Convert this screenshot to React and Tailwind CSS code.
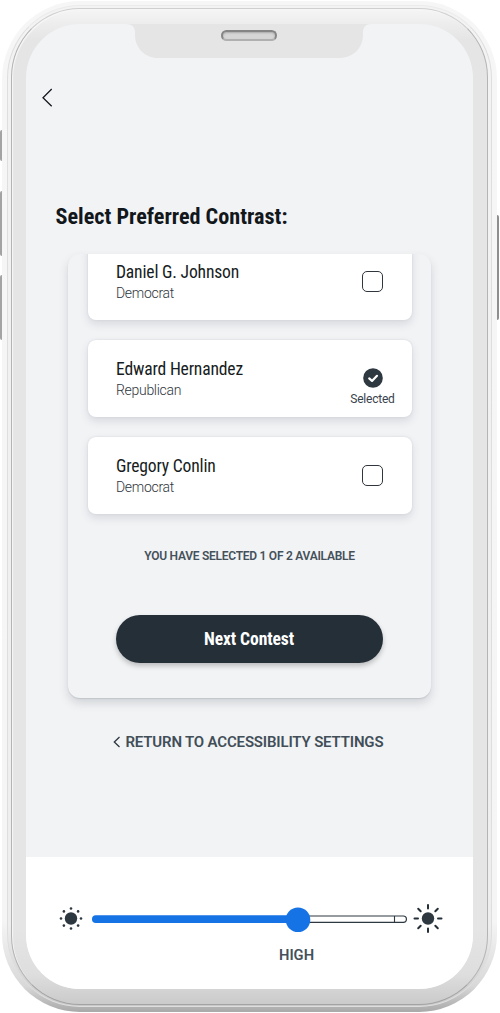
import React from "react";

const COND = "font-['Roboto_Condensed',Roboto,sans-serif] [font-stretch:75%]";

function Row({ name, party, selected }) {
  return (
    <div className="flex h-[77px] w-[324px] shrink-0 items-center justify-between rounded-[8px] bg-white pl-[28.5px] shadow-[0_0_2px_#cfd2da,0_4px_9px_rgba(60,70,90,0.15)]">
      <div className="pt-[1px]">
        <div className={`${COND} h-[22px] whitespace-nowrap text-[17.6px] leading-[22px] tracking-[-0.18px] text-[#171c22]`}>{name}</div>
        <div className="h-[20px] font-[Roboto,sans-serif] text-[14px] font-light leading-[21px] tracking-[-0.3px] text-[#2f353b]">{party}</div>
      </div>
      <div className="flex w-[78px] flex-col items-center">
        {selected ? (
          <>
            <svg className="mt-[18px]" width="20" height="20" viewBox="0 0 20 20">
              <circle cx="10" cy="10" r="9.8" fill="#2d3841" />
              <path d="M6.2 10.4 9 12.9 14 7.8" fill="none" stroke="#fff" strokeWidth="2.2" strokeLinecap="round" strokeLinejoin="round" />
            </svg>
            <div className="mt-[3px] font-[Roboto,sans-serif] text-[12px] leading-[16px] tracking-[-0.22px] text-[#39434c]">Selected</div>
          </>
        ) : (
          <div className="h-[21px] w-[21px] rounded-[5px] border-[1.2px] border-[#30363d] bg-white" />
        )}
      </div>
    </div>
  );
}

function Phone({ children }) {
  return (
    <div className="relative h-[1013px] w-[500px] overflow-hidden bg-white pl-[2px] pt-[1px]">
      <div className="absolute left-0 top-[130px] h-[31px] w-[2px] rounded-l-sm bg-[#a3a3a3]" />
      <div className="absolute left-0 top-[191px] h-[65px] w-[2px] rounded-l-sm bg-[#a3a3a3]" />
      <div className="absolute left-0 top-[275px] h-[65px] w-[2px] rounded-l-sm bg-[#a3a3a3]" />
      <div className="absolute left-[497px] top-[215px] h-[105px] w-[2px] rounded-r-sm bg-[#8e8e8e]" />
      <div className="h-[1011px] w-[495px] rounded-[78px] bg-[linear-gradient(#f6f6f6_0px,#f5f5f5_920px,#d8d8d8_985px,#a9a9a9_1011px)] px-[5px] pb-[5px] pt-[4px]">
        <div className="h-[1002px] w-[485px] rounded-[73px] border border-[#dedede] border-t-[#ebebeb] bg-[linear-gradient(#f3f3f3_0px,#eeeeee_920px,#c8c8c8_1000px)] px-[3px] pb-[3px] pt-[2px]">
          <div className="h-[997px] w-[477px] rounded-[69px] border border-[#b4b4b4] border-t-[#cfcfcf] border-b-[#a3a3a3] bg-[linear-gradient(#f5f5f5_0px,#e5e5e5_30px,#e5e5e5_920px,#dedede_965px,#c9c9c9_997px)] px-[14px] pt-[15px] shadow-[inset_1px_1px_1px_#f7f7f7]">
            <div className="relative h-[965px] w-[447px] overflow-hidden rounded-[54px] bg-[#f2f3f5]">
              <svg className="absolute left-[100px] top-0" width="245" height="34" viewBox="0 0 245 34">
                <path d="M0 0C6 0 9 3 9 9V11C9 24 19 34 32 34H213C227 34 237 24 237 11V9C237 3 240 0 245 0Z" fill="#e5e5e5" />
              </svg>
              <div className="absolute left-[195px] top-[6px] h-[11px] w-[56px] rounded-full border-2 border-[#858585] border-b-[#b0b0b0] bg-[#d6d6d6] shadow-[inset_0_1px_2px_#aaa]" />
              {children}
            </div>
          </div>
        </div>
      </div>
    </div>
  );
}

export default function App() {
  return (
    <Phone>
      <main className="flex h-[833px] flex-col">
        <button className="ml-[16px] mt-[64px] h-[20px] w-[12px]" aria-label="Back">
          <svg width="12" height="20" viewBox="0 0 12 20">
            <path d="M9.7 1 1 9.7 9.7 18.2" fill="none" stroke="#14191f" strokeWidth="1.3" />
          </svg>
        </button>
        <h1 className={`${COND} ml-[29.5px] mt-[93px] h-[31px] whitespace-nowrap text-[22.2px] font-bold leading-[31px] text-[#12171c]`}>Select Preferred Contrast:</h1>
        <section className="ml-[42px] mt-[22px] flex h-[444px] w-[363px] flex-col items-center rounded-[12px] shadow-[0_1px_1px_rgba(120,130,140,0.22),0_5px_10px_rgba(60,70,85,0.18)]">
          <div className="flex h-[284px] w-full shrink-0 flex-col items-center gap-[20px] overflow-hidden rounded-t-[12px]">
            <div className="-mt-[11px]"><Row name="Daniel G. Johnson" party="Democrat" /></div>
            <Row name="Edward Hernandez" party="Republican" selected />
            <Row name="Gregory Conlin" party="Democrat" />
          </div>
          <p className="mt-[10px] font-[Roboto,sans-serif] text-[12px] font-semibold leading-[16px] tracking-[-0.26px] text-[#44515b]">YOU HAVE SELECTED 1 OF 2 AVAILABLE</p>
          <button className={`${COND} mr-px mt-[51px] h-[48px] w-[267px] rounded-full bg-[#252f38] text-[17.6px] font-bold tracking-[-0.1px] text-white shadow-[0_3px_5px_rgba(50,50,50,0.28)]`}>Next Contest</button>
        </section>
        <a className="ml-[87px] mt-[34px] flex h-[20px] items-center gap-[4.5px] whitespace-nowrap font-[Roboto,sans-serif] text-[15px] font-semibold leading-[20px] tracking-[-0.17px] text-[#414e58]">
          <svg width="8" height="12" viewBox="0 0 8 12">
            <path d="M6.5 1 1.3 6l5.2 5" fill="none" stroke="#2d3841" strokeWidth="1.3" />
          </svg>
          <span>RETURN TO ACCESSIBILITY SETTINGS</span>
        </a>
      </main>
      <footer className="flex h-[132px] flex-col bg-white pt-[44px]">
        <div className="flex h-[34px] items-center pl-[33px]">
          <svg width="24" height="24" viewBox="-12 -12.5 24 24" fill="#2d3841">
            <circle r="6.2" />
            <circle cx="0" cy="-10" r="1.3" />
            <circle cx="7.1" cy="-7.1" r="1.3" />
            <circle cx="10" cy="0" r="1.3" />
            <circle cx="7.1" cy="7.1" r="1.3" />
            <circle cx="0" cy="10" r="1.3" />
            <circle cx="-7.1" cy="7.1" r="1.3" />
            <circle cx="-10" cy="0" r="1.3" />
            <circle cx="-7.1" cy="-7.1" r="1.3" />
          </svg>
          <svg className="ml-[9px]" width="315" height="34" viewBox="0 0 315 34">
            <rect x="200" y="15" width="114.4" height="6.3" rx="3.1" fill="#fff" stroke="#2d3841" strokeWidth="1.2" />
            <path d="M302.5 15v6" stroke="#2d3841" strokeWidth="1.1" />
            <rect x="0" y="14.3" width="215" height="7.7" rx="3.8" fill="#1673e6" />
            <circle cx="206" cy="18.7" r="12.3" fill="#1673e6" />
          </svg>
          <svg className="ml-[6px]" width="30" height="30" viewBox="-15 -15.5 30 30">
            <circle r="6.2" fill="#2d3841" />
            <path d="M0-10V-13.5M0 10V13.5M-10 0H-13.5M10 0H13.5M7.3-7.3l2.5-2.5M-7.3-7.3l-2.5-2.5M7.3 7.3l2.5 2.5M-7.3 7.3l-2.5 2.5" stroke="#252f38" strokeWidth="2" strokeLinecap="round" />
          </svg>
        </div>
        <div className="ml-[253px] mt-[10px] font-[Roboto,sans-serif] text-[14.7px] font-semibold leading-[20px] text-[#44515b]">HIGH</div>
      </footer>
    </Phone>
  );
}
